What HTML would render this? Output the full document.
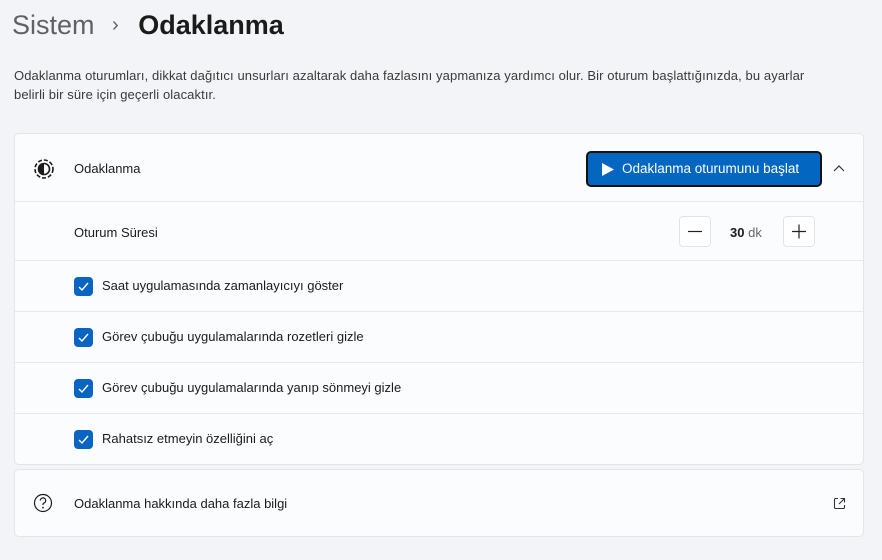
<!DOCTYPE html>
<html><head><meta charset="utf-8"><style>
*{box-sizing:border-box;margin:0;padding:0}
body{width:882px;height:560px;background:#f2f4f8;font-family:"Liberation Sans",sans-serif;color:#1b1b1b;position:relative;overflow:hidden}
.h{position:absolute;top:10px;left:12px;font-size:27px;white-space:nowrap}
.h .g{color:#5f6166}
.h .b{font-weight:bold;color:#1b1b1b}
.desc{position:absolute;left:14px;top:66px;width:830px;font-size:13px;line-height:19px;color:#3a3a3a;letter-spacing:0.1px}
.card{position:absolute;left:14px;width:850px;background:#fbfcfd;border:1px solid #e3e5e8;border-radius:5px}
.row{position:absolute;left:0;right:0;border-top:1px solid #e6e8eb}
.t{position:absolute;left:59px;font-size:13px}
.cb{position:absolute;left:59px;width:19px;height:19px;background:#0a64c2;border-radius:4px}
.cb svg{position:absolute;left:3px;top:3px}
.ct{position:absolute;left:87px;font-size:13px}
.btn{position:absolute;left:571px;top:17px;width:236px;height:36px;background:#0366c1;border:2px solid #111;border-radius:5px;color:#fff;font-size:13.5px;line-height:32px;padding-left:34px}
.sq{position:absolute;width:32px;height:31px;background:#fff;border:1px solid #e1e3e6;border-radius:4px}
</style></head><body>
<div class="h"><span class="g">Sistem</span> <span class="g" style="font-size:20px;margin:0 12px 0 10px;position:relative;top:-3px">›</span> <span class="b">Odaklanma</span></div>
<div class="desc">Odaklanma oturumları, dikkat dağıtıcı unsurları azaltarak daha fazlasını yapmanıza yardımcı olur. Bir oturum başlattığınızda, bu ayarlar<br>belirli bir süre için geçerli olacaktır.</div>
<div class="card" style="top:133px;height:332px">
 <svg style="position:absolute;left:18px;top:24px" width="22" height="22" viewBox="0 0 22 22"><circle cx="11" cy="11" r="9" fill="none" stroke="#1b1b1b" stroke-width="1.6" stroke-dasharray="4 2"/><circle cx="11" cy="11" r="5.5" fill="none" stroke="#1b1b1b" stroke-width="1.6"/><path d="M11 5.5A5.5 5.5 0 0 0 11 16.5Z" fill="#1b1b1b"/></svg>
 <div class="t" style="top:27px">Odaklanma</div>
 <div class="btn"><svg style="position:absolute;left:13px;top:9px" width="14" height="15" viewBox="0 0 14 15"><path d="M1 1L13 7.5L1 14Z" fill="#fff"/></svg>Odaklanma oturumunu başlat</div>
 <svg style="position:absolute;left:818px;top:30px" width="12" height="8" viewBox="0 0 12 8"><path d="M1 7L6 2L11 7" fill="none" stroke="#333" stroke-width="1.2"/></svg>
 <div class="row" style="top:67px;height:59px">
  <div class="t" style="top:23px">Oturum Süresi</div>
  <div class="sq" style="left:664px;top:14px"><svg width="30" height="29" viewBox="0 0 30 29"><path d="M8 14.5H22" stroke="#222" stroke-width="1.2"/></svg></div>
  <div style="position:absolute;left:715px;top:23px;font-size:13px"><b>30</b> <span style="color:#666">dk</span></div>
  <div class="sq" style="left:768px;top:14px"><svg width="30" height="29" viewBox="0 0 30 29"><path d="M8 14.5H22M15 7.5V21.5" stroke="#222" stroke-width="1.2"/></svg></div>
 </div>
 <div class="row" style="top:126px;height:51px"><div class="cb" style="top:16px"><svg width="13" height="13" viewBox="0 0 13 13"><path d="M2 7L5 10L11 3" fill="none" stroke="#fff" stroke-width="1.4"/></svg></div><div class="ct" style="top:17px">Saat uygulamasında zamanlayıcıyı göster</div></div>
 <div class="row" style="top:177px;height:51px"><div class="cb" style="top:16px"><svg width="13" height="13" viewBox="0 0 13 13"><path d="M2 7L5 10L11 3" fill="none" stroke="#fff" stroke-width="1.4"/></svg></div><div class="ct" style="top:17px">Görev çubuğu uygulamalarında rozetleri gizle</div></div>
 <div class="row" style="top:228px;height:51px"><div class="cb" style="top:16px"><svg width="13" height="13" viewBox="0 0 13 13"><path d="M2 7L5 10L11 3" fill="none" stroke="#fff" stroke-width="1.4"/></svg></div><div class="ct" style="top:17px">Görev çubuğu uygulamalarında yanıp sönmeyi gizle</div></div>
 <div class="row" style="top:279px;height:52px"><div class="cb" style="top:16px"><svg width="13" height="13" viewBox="0 0 13 13"><path d="M2 7L5 10L11 3" fill="none" stroke="#fff" stroke-width="1.4"/></svg></div><div class="ct" style="top:17px">Rahatsız etmeyin özelliğini aç</div></div>
</div>
<div class="card" style="top:469px;height:68px">
 <svg style="position:absolute;left:18px;top:23px" width="20" height="20" viewBox="0 0 20 20"><circle cx="10" cy="10" r="8.5" fill="none" stroke="#1b1b1b" stroke-width="1.2"/><path d="M7.3 7.6A2.7 2.7 0 1 1 10.6 10.2C10 10.5 10 11 10 12" fill="none" stroke="#1b1b1b" stroke-width="1.2"/><circle cx="10" cy="14.6" r="0.9" fill="#1b1b1b"/></svg>
 <div class="t" style="top:26px">Odaklanma hakkında daha fazla bilgi</div>
 <svg style="position:absolute;left:818px;top:27px" width="13" height="13" viewBox="0 0 13 13"><path d="M5 1.5H2.5A1 1 0 0 0 1.5 2.5V10.5A1 1 0 0 0 2.5 11.5H10.5A1 1 0 0 0 11.5 10.5V8M7.5 1.5H11.5V5.5M11.5 1.5L6 7" fill="none" stroke="#333" stroke-width="1.1"/></svg>
</div>
</body></html>
